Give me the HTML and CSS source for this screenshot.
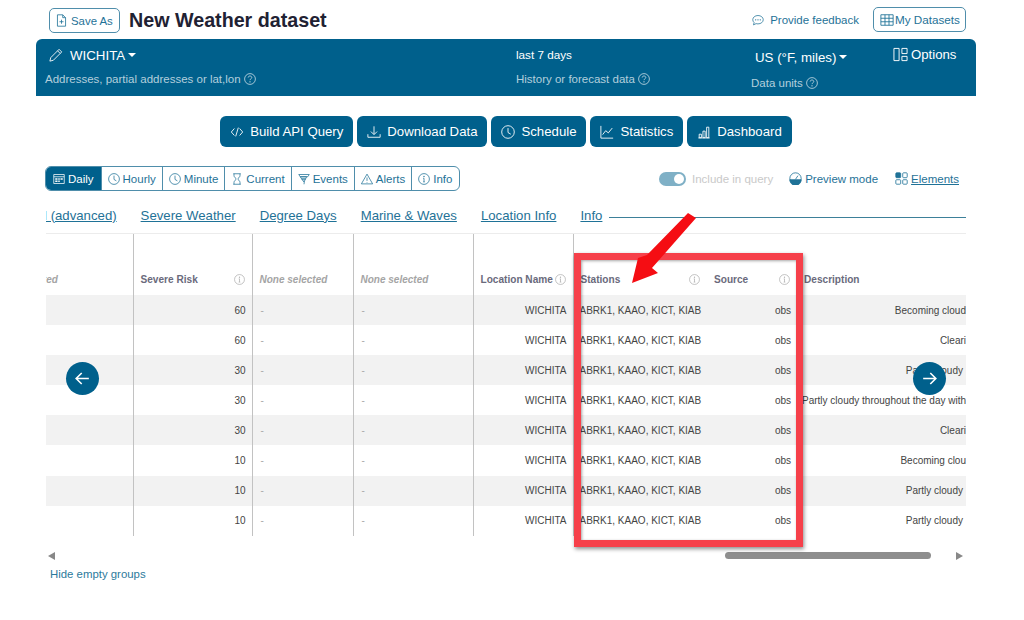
FILE: index.html
```html
<!DOCTYPE html>
<html lang="en">
<head>
<meta charset="utf-8">
<title>New Weather dataset</title>
<link rel="stylesheet" href="styles.css">
</head>
<body>
<svg class="sprite" width="0" height="0" aria-hidden="true">
  <symbol id="i-clock" viewBox="0 0 16 16"><circle cx="8" cy="8" r="7.2"/><path d="M8 3.5V8.6L11.2 10.5"/></symbol>
  <symbol id="i-info" viewBox="0 0 16 16"><circle cx="8" cy="8" r="7.2"/><path d="M8 7v4.6M6.8 11.8h2.4M6.9 7h1.1"/><circle class="dot" cx="8" cy="4.6" r=".9"/></symbol>
  <symbol id="i-help" viewBox="0 0 16 16"><circle cx="8" cy="8" r="7.2"/><path d="M5.6 6.1C5.7 4.7 6.7 4 8 4c1.400 0 2.400.9 2.400 2 0 1.700-2.400 1.800-2.400 3.500"/><circle class="dot" cx="8" cy="11.800" r=".9"/></symbol>
</svg>
<div class="page">
  <header class="top">
    <button class="outline save">
      <svg class="ic" viewBox="0 0 16 16"><path d="M3 1h6.500L13 4.500V15H3zM9.500 1v3.500H13M8 7v5M5.500 9.500h5"/></svg>
      <span>Save As</span>
    </button>
    <h1 class="title">New Weather dataset</h1>
    <a class="feedback">
      <svg class="ic" viewBox="0 0 16 16"><path d="M8 2c3.900 0 7 2.500 7 5.600s-3.100 5.600-7 5.600c-.9 0-1.700-.1-2.500-.4L2 14.500l.8-3.100C1.700 10.400 1 9.100 1 7.600 1 4.500 4.100 2 8 2z"/><path class="dots" d="M4.900 7.700h.1M7.950 7.700h.1M11 7.700h.1"/></svg>
      <span>Provide feedback</span>
    </a>
    <button class="outline datasets">
      <svg class="ic" viewBox="0 0 16 16"><path d="M1 2h14v12H1zM1 6h14M1 10h14M5.700 2v12M10.300 2v12"/></svg>
      <span>My Datasets</span>
    </button>
  </header>

  <section class="bar">
    <div class="bar-col">
      <div class="bar-value loc">
        <svg class="ic pencil" viewBox="0 0 16 16"><path d="M11.500 1.500l3 3L5 14l-4 1 1-4zM9.800 3.200l3 3"/></svg>
        <span>WICHITA</span><span class="caret"></span>
      </div>
      <div class="bar-label"><span>Addresses, partial addresses or lat,lon</span><svg class="q"><use href="#i-help"/></svg></div>
    </div>
    <div class="bar-col">
      <div class="bar-value small">last 7 days</div>
      <div class="bar-label"><span>History or forecast data</span><svg class="q"><use href="#i-help"/></svg></div>
    </div>
    <div class="bar-col units">
      <div class="bar-value"><span>US (°F, miles)</span><span class="caret"></span></div>
      <div class="bar-label"><span>Data units</span><svg class="q"><use href="#i-help"/></svg></div>
    </div>
    <div class="bar-col">
      <div class="bar-value options">
        <svg class="ic" viewBox="0 0 16 16"><path d="M1 1.500h5.500v13H1zM9.500 1.500H15v5.500H9.500zM9.500 10H15v4.500H9.500z"/></svg>
        <span>Options</span>
      </div>
    </div>
  </section>

  <nav class="tools">
    <button class="tool"><svg class="ic" viewBox="0 0 16 16"><path d="M5 4L1.500 8 5 12M11 4l3.500 4L11 12M9.500 3l-3 10"/></svg><span>Build API Query</span></button>
    <button class="tool"><svg class="ic" viewBox="0 0 16 16"><path d="M1 10.500V14h14v-3.500M8 1.500V10.500M4.500 7.500L8 11l3.500-3.500"/></svg><span>Download Data</span></button>
    <button class="tool"><svg class="ic"><use href="#i-clock"/></svg><span>Schedule</span></button>
    <button class="tool"><svg class="ic" viewBox="0 0 16 16"><path d="M1 1v14h14M3 11l3.500-4.500 3 2.500L14 3.500"/></svg><span>Statistics</span></button>
    <button class="tool"><svg class="ic" viewBox="0 0 16 16"><path d="M1.500 14.800h13M2.500 10.500h2.500v4H2.500zM6.800 7h2.500v7.500H6.800zM11 2.500h2.500v12H11z"/></svg><span>Dashboard</span></button>
  </nav>

  <div class="controls">
    <div class="tabs">
      <a class="tab on"><svg class="ic" viewBox="0 0 16 16"><path d="M1 2h14v12H1zM1 5h14"/><path class="fill" d="M3 7h3v2H3zM7 7h2v2H7zM10 7h3v2h-3zM3 10h3v2H3zM7 10h2v2H7z"/></svg><span>Daily</span></a>
      <a class="tab"><svg class="ic"><use href="#i-clock"/></svg><span>Hourly</span></a>
      <a class="tab"><svg class="ic"><use href="#i-clock"/></svg><span>Minute</span></a>
      <a class="tab"><svg class="ic" viewBox="0 0 16 16"><path d="M3 1h10M3 15h10M4 1v2.500C4 6 7 7 7 8s-3 2-3 4.500V15M12 1v2.500C12 6 9 7 9 8s3 2 3 4.500V15"/></svg><span>Current</span></a>
      <a class="tab"><svg class="ic" viewBox="0 0 16 16"><path d="M1 2h14l-2 3H3zM3 5h8.500L10 8H5zM5 8h5l-1.500 3H7zM7 11h1.500L8 15"/></svg><span>Events</span></a>
      <a class="tab"><svg class="ic" viewBox="0 0 16 16"><path d="M8 1.500L15.500 14.500H.5zM8 6v4.500M8 12v.8"/></svg><span>Alerts</span></a>
      <a class="tab"><svg class="ic"><use href="#i-info"/></svg><span>Info</span></a>
    </div>
    <div class="view">
      <span class="toggle"><span class="knob"></span></span>
      <span class="muted">Include in query</span>
      <a class="preview">
        <svg class="ic" viewBox="0 0 16 16"><circle cx="8" cy="8" r="7"/><path class="solid" d="M1 9.500h14A7 7 0 0 1 1 9.500z"/><path d="M8 9L11 4.500M3.500 7.500v.1M5 4.500v.1M8 3.300v.1"/></svg>
        <span>Preview mode</span>
      </a>
      <a class="elements">
        <svg class="ic" viewBox="0 0 16 16"><rect class="solid" x="1" y="1" width="6" height="6" rx="1"/><rect x="9.500" y="1" width="5.500" height="6" rx="1"/><rect x="1" y="9.500" width="6" height="5.500" rx="1"/><rect x="9.500" y="9.500" width="5.500" height="5.500" rx="1"/></svg>
        <span>Elements</span>
      </a>
    </div>
  </div>

  <div class="groups">
    <a class="group first">Agricultural (advanced)</a>
    <a class="group">Severe Weather</a>
    <a class="group">Degree Days</a>
    <a class="group">Marine &amp; Waves</a>
    <a class="group">Location Info</a>
    <a class="group">Info</a>
    <span class="rule"></span>
  </div>

  <div class="table-wrap">
    <table class="data">
      <colgroup>
        <col class="c1"><col class="c2"><col class="c3"><col class="c4"><col class="c5"><col class="c6"><col class="c7"><col class="c8">
      </colgroup>
      <thead>
        <tr>
          <th class="none">None selected</th>
          <th class="line"><span class="th">Severe Risk<svg class="i"><use href="#i-info"/></svg></span></th>
          <th class="line none">None selected</th>
          <th class="line none">None selected</th>
          <th class="line"><span class="th">Location Name<svg class="i"><use href="#i-info"/></svg></span></th>
          <th class="line"><span class="th">Stations<svg class="i"><use href="#i-info"/></svg></span></th>
          <th><span class="th">Source<svg class="i"><use href="#i-info"/></svg></span></th>
          <th>Description</th>
        </tr>
      </thead>
      <tbody>
        <tr><td></td><td class="line r">60</td><td class="line dash">-</td><td class="line dash">-</td><td class="line r">WICHITA</td><td class="line st">ABRK1, KAAO, KICT, KIAB</td><td class="r">obs</td><td class="r clip">Becoming cloud</td></tr>
        <tr><td></td><td class="line r">60</td><td class="line dash">-</td><td class="line dash">-</td><td class="line r">WICHITA</td><td class="line st">ABRK1, KAAO, KICT, KIAB</td><td class="r">obs</td><td class="r clip">Cleari</td></tr>
        <tr><td></td><td class="line r">30</td><td class="line dash">-</td><td class="line dash">-</td><td class="line r">WICHITA</td><td class="line st">ABRK1, KAAO, KICT, KIAB</td><td class="r">obs</td><td class="r desc">Partly cloudy</td></tr>
        <tr><td></td><td class="line r">30</td><td class="line dash">-</td><td class="line dash">-</td><td class="line r">WICHITA</td><td class="line st">ABRK1, KAAO, KICT, KIAB</td><td class="r">obs</td><td class="r clip">Partly cloudy throughout the day with</td></tr>
        <tr><td></td><td class="line r">30</td><td class="line dash">-</td><td class="line dash">-</td><td class="line r">WICHITA</td><td class="line st">ABRK1, KAAO, KICT, KIAB</td><td class="r">obs</td><td class="r clip">Cleari</td></tr>
        <tr><td></td><td class="line r">10</td><td class="line dash">-</td><td class="line dash">-</td><td class="line r">WICHITA</td><td class="line st">ABRK1, KAAO, KICT, KIAB</td><td class="r">obs</td><td class="r clip">Becoming clou</td></tr>
        <tr><td></td><td class="line r">10</td><td class="line dash">-</td><td class="line dash">-</td><td class="line r">WICHITA</td><td class="line st">ABRK1, KAAO, KICT, KIAB</td><td class="r">obs</td><td class="r desc">Partly cloudy</td></tr>
        <tr><td></td><td class="line r">10</td><td class="line dash">-</td><td class="line dash">-</td><td class="line r">WICHITA</td><td class="line st">ABRK1, KAAO, KICT, KIAB</td><td class="r">obs</td><td class="r desc">Partly cloudy</td></tr>
      </tbody>
    </table>
  </div>

  <div class="scrollbar">
    <span class="sb-left"></span>
    <span class="sb-track"><span class="sb-thumb"></span></span>
    <span class="sb-right"></span>
  </div>
  <a class="hide-empty">Hide empty groups</a>

  <button class="nav prev"><svg viewBox="0 0 24 24"><path d="M20 12H4.500M11 5l-7 7 7 7"/></svg></button>
  <button class="nav next"><svg viewBox="0 0 24 24"><path d="M4 12h15.500M13 5l7 7-7 7"/></svg></button>

  <div class="highlight"></div>
  <svg class="pointer" viewBox="0 0 70 80"><path d="M57 2L65 7 21 57 27 62 1 72 7 47 16 44z"/></svg>
</div>
</body>
</html>
```
FILE: styles.css
```css
* { box-sizing: border-box; }
html, body { margin: 0; padding: 0; background: #fff; }
body { font-family: "Liberation Sans", Arial, sans-serif; color: #444; }
.sprite { position: absolute; }
.page { position: relative; width: 1024px; height: 620px; overflow: hidden; }
button { font-family: inherit; cursor: pointer; white-space: nowrap; }
svg { fill: none; stroke: currentColor; stroke-width: 1; flex: none; }
symbol .dot, .dot { fill: currentColor; stroke: none; }
.ic { width: 14px; height: 14px; }

.top { display: flex; align-items: center; height: 39px; padding: 0 58px 0 49px; }
.outline { display: flex; align-items: center; height: 25px; background: #fff; border: 1px solid #4f8eab; border-radius: 5px; color: #1f7297; font-size: 11.400px; padding: 0; }
.save { width: 71px; gap: 3px; padding-left: 5px; margin-top: 2px; }
.save .ic { width: 13px; height: 13px; }
.title { margin: 0 0 0 9px; font-size: 19.700px; line-height: 24px; font-weight: 700; color: #1f2233; flex: 1; white-space: nowrap; }
.feedback { display: flex; align-items: center; gap: 6px; color: #1f7297; font-size: 11.500px; margin-right: 14px; white-space: nowrap; }
.feedback .ic { width: 12px; height: 12px; }
.dots { stroke-width: 1.600; stroke-linecap: round; }
.datasets { width: 93px; gap: 1px; padding-left: 6px; font-size: 11.700px; }

.bar { display: grid; grid-template-columns: 471px 235px 142px 1fr; height: 57px; margin: 0 48px 0 36px; padding-left: 9px; background: #00608c; border-radius: 6px 6px 0 0; color: #fff; }
.bar-col { display: flex; flex-direction: column; }
.bar-value { display: flex; align-items: center; height: 20px; margin-top: 6px; font-size: 13.300px; white-space: nowrap; }
.bar-value.loc { gap: 7px; padding-left: 4px; }
.bar-value.loc .caret { margin-left: -4px; }
.pencil { width: 14px; height: 14px; }
.bar-value.small { font-size: 11.700px; margin-top: 5px; }
.bar-label { margin-top: 6px; font-size: 11.500px; line-height: 16px; color: #b3cfdc; display: flex; align-items: center; gap: 3px; white-space: nowrap; }
.small + .bar-label { margin-top: 7px; }
.bar-value.options { gap: 3px; margin-top: 5px; font-size: 13.200px; }
.bar-value.options .ic { width: 15px; height: 15px; }
.units .bar-value { padding-left: 4px; margin-top: 8px; }
.units .bar-label { margin-top: 8px; }
.q { width: 12px; height: 12px; color: #d5e5ec; }
.caret { display: inline-block; width: 0; height: 0; margin-left: 3px; border: 4px solid transparent; border-top-color: #fff; border-bottom-width: 0; }

.tools { display: flex; justify-content: center; gap: 4px; margin: 20px 48px 0 36px; }
.tool { display: flex; align-items: center; gap: 6px; height: 31px; padding: 0 10px; background: #00608c; color: #fff; border: 0; border-radius: 6px; font-size: 13.200px; }

.controls { display: flex; justify-content: space-between; align-items: center; margin: 19px 65px 0 45px; height: 25px; }
.tabs { display: flex; height: 25px; border: 1px solid #4f8eab; border-radius: 6px; overflow: hidden; font-size: 11.500px; }
.tab { display: flex; align-items: center; gap: 3px; padding: 0 6px; color: #1f7297; border-right: 1px solid #4f8eab; white-space: nowrap; }
.tab:last-child { border-right: 0; padding-right: 7px; }
.tab .ic { width: 12px; height: 12px; }
.tab.on { padding: 0 7px; background: #00608c; color: #fff; }
.fill { fill: currentColor; stroke: none; }
.view { display: flex; align-items: center; font-size: 11.500px; white-space: nowrap; }
.toggle { display: flex; justify-content: flex-end; align-items: center; width: 27px; height: 14px; padding: 0 2px; background: #7fb0c6; border-radius: 7px; }
.knob { width: 10px; height: 10px; border-radius: 50%; background: #fff; }
.muted { margin-left: 6px; color: #c9c9c9; }
.preview { display: flex; align-items: center; gap: 3px; margin-left: 16px; color: #1f7297; }
.preview .ic { width: 13px; height: 13px; }
.solid { fill: currentColor; }
.elements { display: flex; align-items: center; gap: 3px; margin-left: 17px; color: #1f7297; text-decoration: underline; }
.elements .ic { width: 13px; height: 13px; }

.groups { display: flex; align-items: center; gap: 24px; margin: 14px 58px 0 46px; height: 20px; overflow: hidden; font-size: 13.200px; color: #1f7297; }
.group { text-decoration: underline; white-space: nowrap; flex: none; }
.group.first { margin-left: -65px; }
.rule { flex: 1; height: 1px; margin: 4px 0 0 -17px; background: #3d8099; }

.table-wrap { width: 920px; margin: 8px 0 0 46px; overflow: hidden; border-top: 1px solid #ececec; }
.data { width: 983px; margin-left: -63px; table-layout: fixed; border-collapse: collapse; font-size: 10px; }
.c1 { width: 150px; } .c2 { width: 119px; } .c3 { width: 101px; } .c4 { width: 120px; }
.c5 { width: 100px; } .c6 { width: 134px; } .c7 { width: 90px; } .c8 { width: 169px; }
th { height: 61px; padding: 30px 7px 0 7px; text-align: left; font-weight: 700; font-size: 10.100px; color: #6a6a7c; vertical-align: middle; }
th.none { font-style: italic; font-size: 10px; color: #a5a5a5; }
.th { display: flex; justify-content: space-between; align-items: center; }
.i { width: 11px; height: 11px; color: #a9a9a9; }
td { height: 30.100px; padding: 0 6px 0 8px; white-space: nowrap; overflow: hidden; color: #444; }
tbody tr:nth-child(odd) td { background: #f2f2f2; }
.line { border-left: 1px solid #c2c2c2; }
.r { text-align: right; }
.dash { color: #aaa; }
.st { padding-left: 6px; }
.desc { padding-right: 3px; }
.clip { padding-left: 0; padding-right: 0; }

.scrollbar { display: flex; align-items: center; width: 920px; height: 8px; margin: 16px 0 0 48px; }
.sb-left { width: 0; height: 0; border: 4px solid transparent; border-right: 7px solid #888; border-left-width: 0; }
.sb-track { flex: 1; display: flex; justify-content: flex-end; padding-right: 25px; }
.sb-thumb { width: 206px; height: 7px; background: #8e8e8e; border-radius: 4px; }
.sb-right { width: 0; height: 0; margin-right: 5px; border: 4px solid transparent; border-left: 7px solid #888; border-right-width: 0; }
.hide-empty { display: block; margin: 7px 0 0 50px; font-size: 11.400px; line-height: 14px; color: #2c7a9c; }

.nav { position: absolute; top: 362px; width: 33px; height: 33px; padding: 7px; background: #00608c; color: #fff; border: 0; border-radius: 50%; }
.nav svg { display: block; width: 19px; height: 19px; stroke-width: 2; }
.prev { left: 66px; }
.next { left: 913px; }

.highlight { position: absolute; left: 574px; top: 253px; width: 229px; height: 294px; border: 7px solid #f6404a; box-shadow: 1px 2px 4px rgba(0,0,0,.45), inset 1px 1px 3px rgba(0,0,0,.35); }
.pointer { position: absolute; left: 631px; top: 211px; width: 70px; height: 80px; }
.pointer path { fill: #f50d13; stroke: none; }
```
